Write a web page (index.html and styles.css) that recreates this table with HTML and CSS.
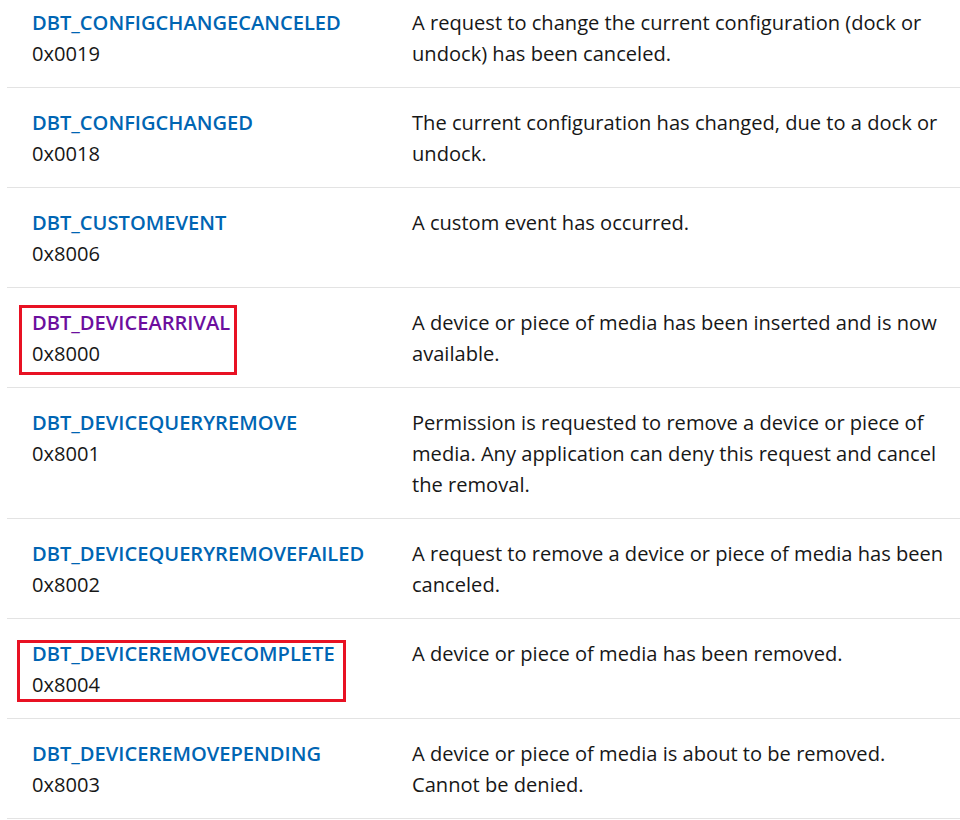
FILE: index.html
```html
<!DOCTYPE html>
<html lang="en">
<head>
    <meta charset="UTF-8">
    <meta name="viewport" content="width=device-width, initial-scale=1.0">
    <title>Device event types</title>
    <link rel="stylesheet" href="styles.css">
</head>
<body>
    <table class="events">
        <tr>
            <td class="name"><div class="entry"><a href="#">DBT_CONFIGCHANGECANCELED</a><br>0x0019</div></td>
            <td class="desc">A request to change the current configuration (dock or<br>undock) has been canceled.</td>
        </tr>
        <tr>
            <td class="name"><div class="entry"><a href="#">DBT_CONFIGCHANGED</a><br>0x0018</div></td>
            <td class="desc">The current configuration has changed, due to a dock or<br>undock.</td>
        </tr>
        <tr>
            <td class="name"><div class="entry"><a href="#">DBT_CUSTOMEVENT</a><br>0x8006</div></td>
            <td class="desc">A custom event has occurred.</td>
        </tr>
        <tr>
            <td class="name"><div class="entry mark mark-arrival"><a href="#" class="visited">DBT_DEVICEARRIVAL</a><br>0x8000</div></td>
            <td class="desc">A device or piece of media has been inserted and is now<br>available.</td>
        </tr>
        <tr>
            <td class="name"><div class="entry"><a href="#">DBT_DEVICEQUERYREMOVE</a><br>0x8001</div></td>
            <td class="desc">Permission is requested to remove a device or piece of<br>media. Any application can deny this request and cancel<br>the removal.</td>
        </tr>
        <tr>
            <td class="name"><div class="entry"><a href="#">DBT_DEVICEQUERYREMOVEFAILED</a><br>0x8002</div></td>
            <td class="desc">A request to remove a device or piece of media has been<br>canceled.</td>
        </tr>
        <tr>
            <td class="name"><div class="entry mark mark-complete"><a href="#">DBT_DEVICEREMOVECOMPLETE</a><br>0x8004</div></td>
            <td class="desc">A device or piece of media has been removed.</td>
        </tr>
        <tr>
            <td class="name"><div class="entry"><a href="#">DBT_DEVICEREMOVEPENDING</a><br>0x8003</div></td>
            <td class="desc">A device or piece of media is about to be removed.<br>Cannot be denied.</td>
        </tr>
    </table>
</body>
</html>
```

FILE: styles.css
```css
body {
    margin: 0;
    background-color: #fff;
    color: #171717;
    font-family: "Open Sans", "Noto Sans", sans-serif;
    font-size: 20.1px;
    line-height: 31px;
    overflow: hidden;
}
.events {
    border-collapse: collapse;
    width: 953px;
    margin: -12px 0 0 7px;
}
.events td {
    vertical-align: top;
    padding: 19px 10px 18px 25px;
    border-bottom: 1px solid #e3e3e3;
    white-space: nowrap;
}
.events .name {
    width: 345px;
}
.entry {
    display: inline-block;
}
a {
    color: #0065b3;
    font-weight: 600;
    text-decoration: none;
}
a.visited {
    color: #6c0f9e;
}
.mark {
    position: relative;
}
.mark::after {
    content: "";
    position: absolute;
    border: 3px solid #e81123;
}
.mark-arrival::after {
    top: -2px;
    bottom: -6px;
    left: -13px;
    right: -7px;
}
.mark-complete::after {
    top: 2px;
    bottom: -2px;
    left: -15px;
    right: -11px;
}
```
